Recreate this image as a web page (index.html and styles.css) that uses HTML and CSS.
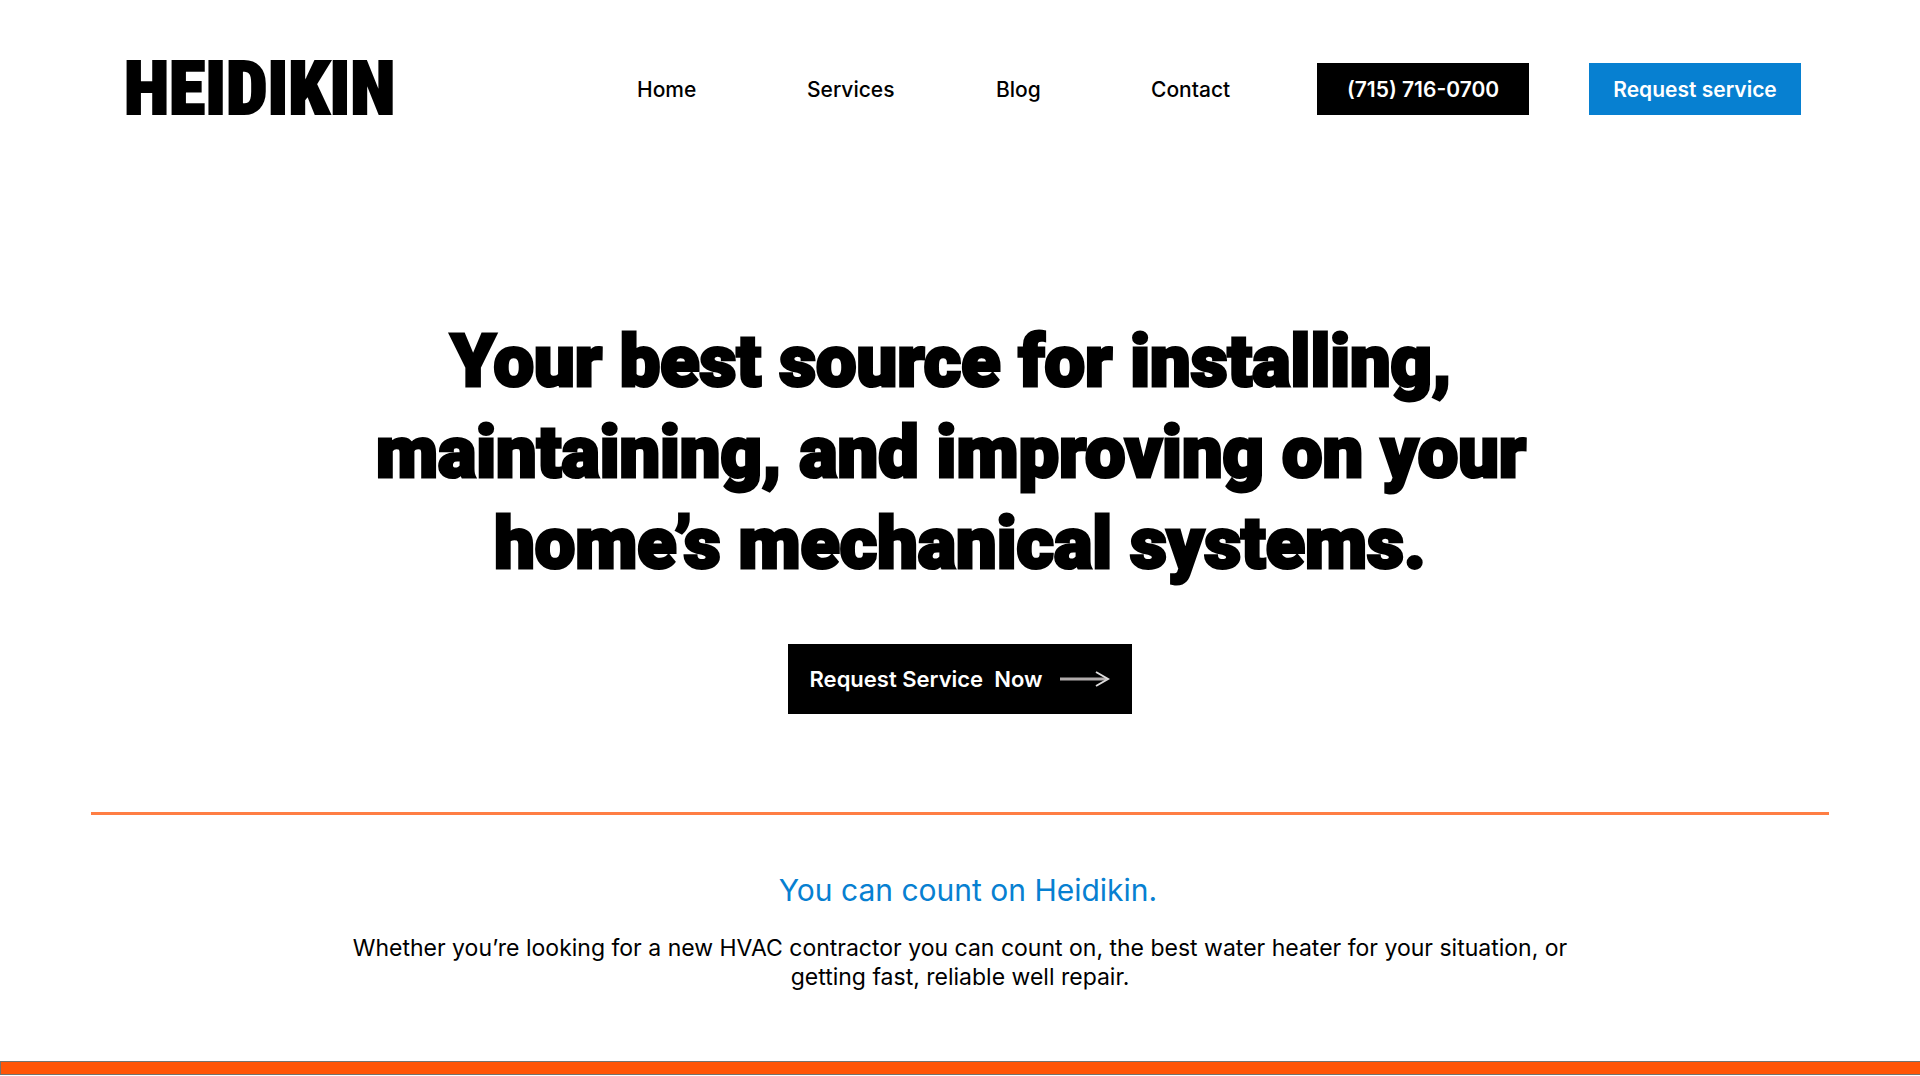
FILE: index.html
```
<!DOCTYPE html>
<html lang="en">
<head>
  <meta charset="utf-8">
  <meta name="viewport" content="width=device-width, initial-scale=1">
  <title>Heidikin</title>
  <link rel="stylesheet" href="styles.css">
</head>
<body>
  <header class="header">
    <a class="logo" href="#">HEIDIKIN</a>
    <nav class="nav">
      <a href="#">Home</a>
      <a href="#">Services</a>
      <a href="#">Blog</a>
      <a href="#">Contact</a>
    </nav>
    <div class="actions">
      <a class="button button-phone" href="tel:+17157160700">(715) 716-0700</a>
      <button class="button button-request" type="button">Request service</button>
    </div>
  </header>

  <main>
    <section class="hero">
      <h1 class="hero-title">Your best source for installing,&nbsp;<br>maintaining, and improving on your&nbsp;<br>home’s mechanical systems.</h1>
      <button class="hero-button" type="button">
        <span>Request Service&nbsp; Now</span>
        <svg class="arrow" viewBox="0 0 50 18" width="50" height="18" fill="none" aria-hidden="true">
          <path d="M0 9H46" stroke="#b0abab" stroke-width="3"/>
          <path d="M36 2L48 9L36 16" stroke="#dedcdc" stroke-width="2"/>
        </svg>
      </button>
    </section>

    <section class="intro">
      <h2 class="intro-title">You can count on Heidikin.</h2>
      <p class="intro-text">Whether you’re looking for a new HVAC contractor you can count on, the best water heater for your situation, or getting fast, reliable well repair.</p>
    </section>

    <div class="band"></div>
  </main>
</body>
</html>
```
FILE: styles.css
```
* {
  box-sizing: border-box;
}

body {
  margin: 0;
  background: #fff;
  color: #000;
  font-family: Inter, "Liberation Sans", sans-serif;
}

a {
  color: inherit;
  text-decoration: none;
}

button {
  border: 0;
  font-family: inherit;
  cursor: pointer;
}

.header {
  display: flex;
  align-items: center;
  padding: 52px 119px 0 124px;
}

.logo {
  flex: 0 0 513px;
  font-family: "Roboto Condensed", Roboto, sans-serif;
  font-size: 74px;
  font-weight: 900;
  font-stretch: condensed;
  line-height: 74px;
  -webkit-text-stroke: 2px #000;
}

.nav {
  display: grid;
  grid-template-columns: 170px 189px 155px auto;
  padding-top: 2px;
  font-size: 21px;
  font-weight: 500;
  line-height: 26px;
}

.actions {
  display: flex;
  gap: 60px;
  margin-left: auto;
}

.button {
  display: flex;
  align-items: center;
  justify-content: center;
  width: 212px;
  height: 52px;
  padding: 2px 0 0;
  color: #fff;
  font-size: 21px;
  font-weight: 600;
  line-height: 26px;
}

.button-phone {
  background: #000;
}

.button-request {
  background: #0780d1;
}

.hero {
  display: flex;
  flex-direction: column;
  align-items: center;
  margin: 0 91px;
  padding: 190px 0 98px;
  border-bottom: 3px solid #ff7e44;
}

.hero-title {
  margin: 0 0 55px;
  font-family: Roboto, sans-serif;
  font-size: 72px;
  font-weight: 900;
  line-height: 91px;
  text-align: center;
  -webkit-text-stroke: 3px #000;
}

.hero-button {
  display: flex;
  align-items: center;
  gap: 18px;
  padding: 20px 22px;
  background: #000;
  color: #fff;
  font-size: 22px;
  font-weight: 600;
  line-height: 30px;
}

.intro {
  max-width: 1268px;
  margin: 0 auto;
  padding: 55px 24px 69px;
  text-align: center;
}

.intro-title {
  margin: 0 0 24px;
  padding-left: 16px;
  color: #0780d1;
  font-size: 30px;
  font-weight: 400;
  line-height: 40px;
}

.intro-text {
  margin: 0;
  font-size: 23px;
  font-weight: 400;
  line-height: 29px;
}

.band {
  height: 14px;
  background: #ff5507;
  border: 1px solid #74736f;
  border-right: 0;
}
```
